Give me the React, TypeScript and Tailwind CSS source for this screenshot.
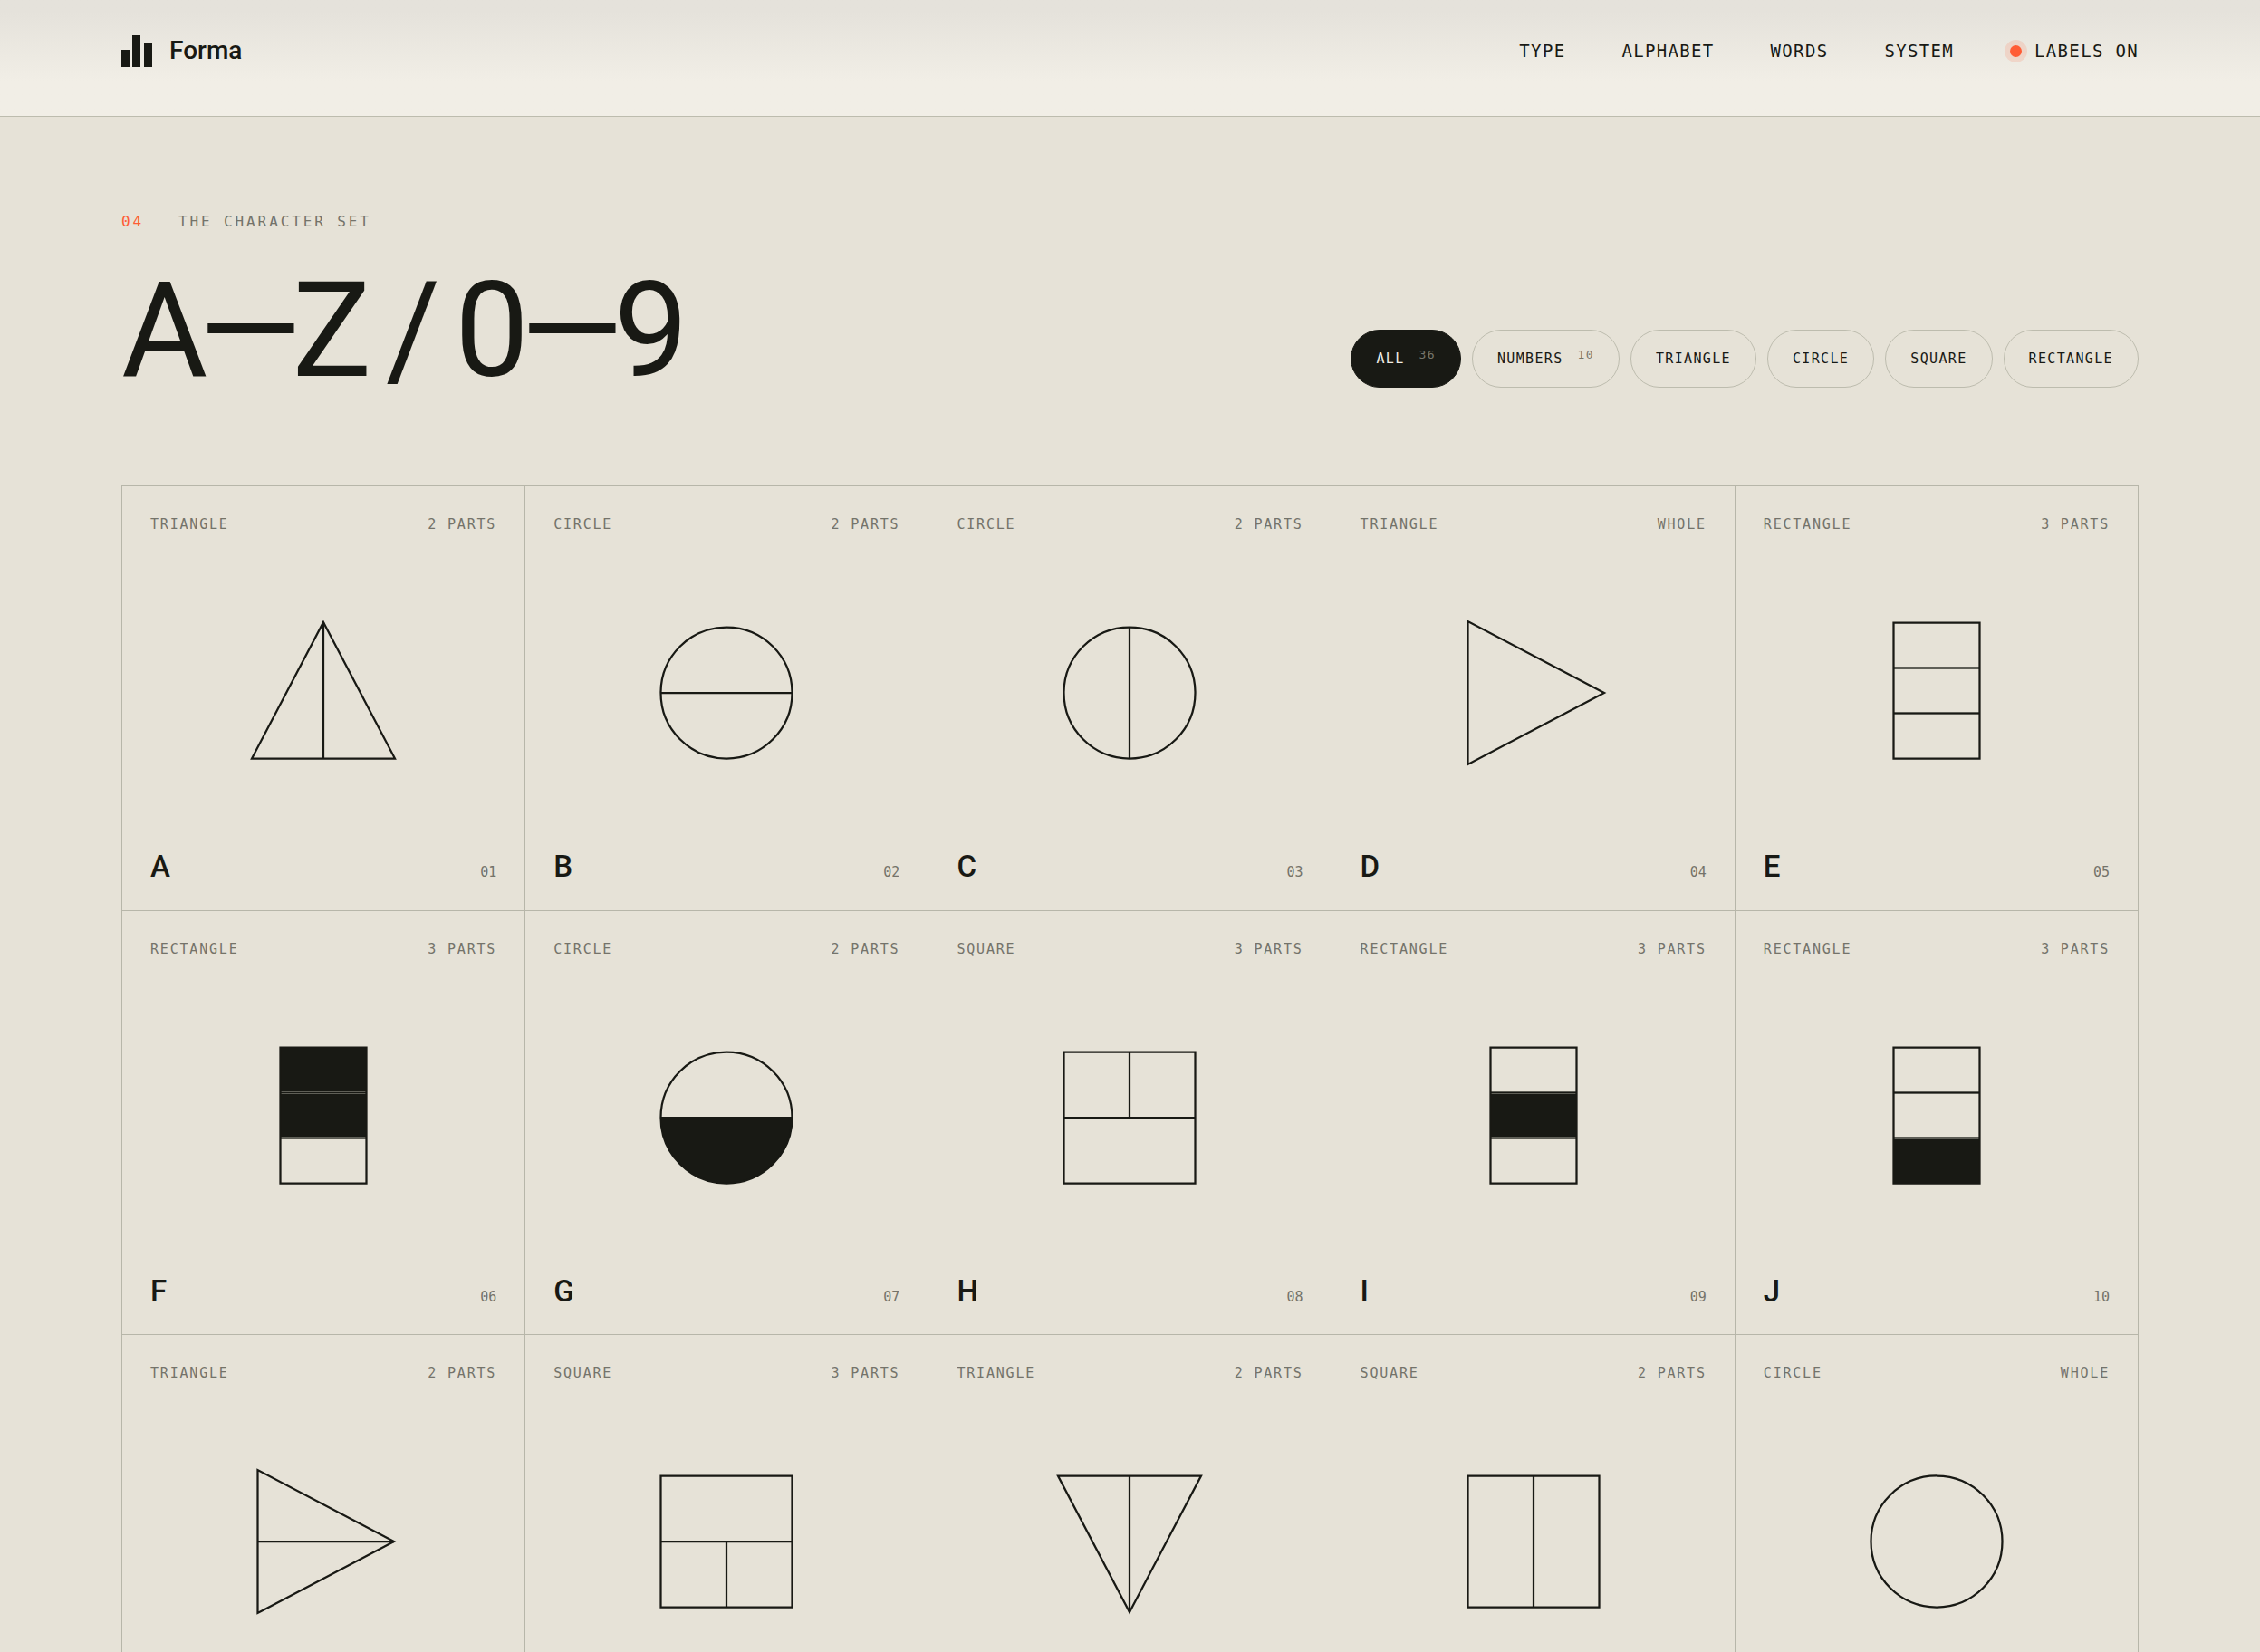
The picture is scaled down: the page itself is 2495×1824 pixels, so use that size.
import React, { useState } from 'react';

type Shape =
  | 'triangleUp'
  | 'triangleRight'
  | 'triangleDown'
  | 'circle'
  | 'square'
  | 'rectangle';

type Line = [number, number, number, number];

interface Glyph {
  letter: string;
  family: string;
  parts: string;
  shape: Shape;
  cuts?: Line[];
  fill?: string;
}

const INK = '#181914';

// Todas as formas usam uma área de 200x200 centrada em 100,100
const OUTLINES: Record<Shape, string> = {
  triangleUp: 'M100 22L179 172.5H21Z',
  triangleRight: 'M27.5 21V179L178 100Z',
  triangleDown: 'M100 178L179 27.5H21Z',
  circle: 'M100 27.5A72.5 72.5 0 0 1 100 172.5A72.5 72.5 0 0 1 100 27.5Z',
  square: 'M27.5 27.5H172.5V172.5H27.5Z',
  rectangle: 'M52.5 22.5H147.5V172.5H52.5Z',
};

const THIRDS: Line[] = [
  [52.5, 72.5, 147.5, 72.5],
  [52.5, 122.5, 147.5, 122.5],
];

const GLYPHS: Glyph[] = [
  { letter: 'A', family: 'Triangle', parts: '2 parts', shape: 'triangleUp', cuts: [[100, 22, 100, 172]] },
  { letter: 'B', family: 'Circle', parts: '2 parts', shape: 'circle', cuts: [[28, 100, 172, 100]] },
  { letter: 'C', family: 'Circle', parts: '2 parts', shape: 'circle', cuts: [[100, 28, 100, 172]] },
  { letter: 'D', family: 'Triangle', parts: 'Whole', shape: 'triangleRight' },
  { letter: 'E', family: 'Rectangle', parts: '3 parts', shape: 'rectangle', cuts: THIRDS },
  { letter: 'F', family: 'Rectangle', parts: '3 parts', shape: 'rectangle', cuts: THIRDS, fill: 'M52.5 22.5H147.5V122.5H52.5Z' },
  { letter: 'G', family: 'Circle', parts: '2 parts', shape: 'circle', cuts: [[28, 100, 172, 100]], fill: 'M27.5 100A72.5 72.5 0 0 0 172.5 100Z' },
  { letter: 'H', family: 'Square', parts: '3 parts', shape: 'square', cuts: [[28, 100, 172, 100], [100, 28, 100, 100]] },
  { letter: 'I', family: 'Rectangle', parts: '3 parts', shape: 'rectangle', cuts: THIRDS, fill: 'M52.5 72.5H147.5V122.5H52.5Z' },
  { letter: 'J', family: 'Rectangle', parts: '3 parts', shape: 'rectangle', cuts: THIRDS, fill: 'M52.5 122.5H147.5V172.5H52.5Z' },
  { letter: 'K', family: 'Triangle', parts: '2 parts', shape: 'triangleRight', cuts: [[28, 100, 178, 100]] },
  { letter: 'L', family: 'Square', parts: '3 parts', shape: 'square', cuts: [[28, 100, 172, 100], [100, 100, 100, 172]] },
  { letter: 'M', family: 'Triangle', parts: '2 parts', shape: 'triangleDown', cuts: [[100, 28, 100, 178]] },
  { letter: 'N', family: 'Square', parts: '2 parts', shape: 'square', cuts: [[100, 28, 100, 172]] },
  { letter: 'O', family: 'Circle', parts: 'Whole', shape: 'circle' },
];

const NAV = ['Type', 'Alphabet', 'Words', 'System'];

const FILTERS = [
  { name: 'All', count: 36 },
  { name: 'Numbers', count: 10 },
  { name: 'Triangle' },
  { name: 'Circle' },
  { name: 'Square' },
  { name: 'Rectangle' },
];

const Figure: React.FC<{ glyph: Glyph }> = ({ glyph }) => (
  <svg viewBox="0 0 200 200" className="h-[200px] w-[200px]" fill="none" stroke={INK} strokeWidth="2.25" aria-hidden="true">
    {glyph.fill && <path d={glyph.fill} fill={INK} stroke="none" />}
    {glyph.shape === 'rectangle' &&
      glyph.cuts?.map(([x1, y1, x2, y2]) => (
        <line key={y1} x1={x1} y1={y1} x2={x2} y2={y2} stroke="#5f5f57" strokeWidth="3" />
      ))}
    {glyph.cuts?.map(([x1, y1, x2, y2]) => (
      <line
        key={`${x1}-${y1}-${x2}`}
        x1={x1}
        y1={y1}
        x2={x2}
        y2={y2}
        strokeWidth={glyph.shape === 'rectangle' ? 1 : 2.25}
      />
    ))}
    <path d={OUTLINES[glyph.shape]} />
  </svg>
);

const Header: React.FC = () => {
  const [labels, setLabels] = useState(true);

  return (
    <header className="flex h-[129px] items-start justify-between border-b border-[#bdbcae] bg-linear-to-b from-[#e5e2db] from-10% to-[#f1eee6] to-70% px-[134px] pt-9">
      <a href="#top" className="flex items-center gap-[18px]">
        <svg viewBox="0 0 35 35" className="h-[35px] w-[35px]" fill={INK} aria-hidden="true">
          <path d="M0 16H9V35H0ZM12 0H21V35H12ZM25 8H34V35H25Z" />
        </svg>
        <span className="text-[28px] leading-10 font-medium">Forma</span>
      </a>
      <nav className="flex items-center gap-[62px] font-['DejaVu_Sans_Mono',monospace] text-[19px] leading-10 tracking-[0.07em] uppercase">
        {NAV.map((item) => (
          <a key={item} href={`#${item.toLowerCase()}`}>
            {item}
          </a>
        ))}
        <button type="button" onClick={() => setLabels(!labels)} className="flex items-center gap-3.5 uppercase">
          <span className="size-[13px] rounded-full bg-[#ff5c35] ring-6 ring-[#ff5c35]/15" />
          Labels {labels ? 'on' : 'off'}
        </button>
      </nav>
    </header>
  );
};

const Filters: React.FC = () => {
  const [active, setActive] = useState('All');

  return (
    <div className="flex gap-3 font-['DejaVu_Sans_Mono',monospace] text-[15px]">
      {FILTERS.map(({ name, count }) => (
        <button
          key={name}
          type="button"
          aria-pressed={active === name}
          onClick={() => setActive(name)}
          className={`flex h-16 items-center rounded-full border px-[27px] tracking-[0.09em] uppercase ${
            active === name ? 'border-[#181914] bg-[#181914] text-[#f1ede5]' : 'border-[#bdbcae]'
          }`}
        >
          {name}
          {count && <span className="ml-4 pb-2 text-[13px] text-[#77766c]">{count}</span>}
        </button>
      ))}
    </div>
  );
};

const GlyphCell: React.FC<{ glyph: Glyph; index: number }> = ({ glyph, index }) => (
  <article className="flex aspect-[0.95] flex-col justify-between border-r border-b border-[#b7b6a9] px-[31px] pt-8 pb-[30px] font-['DejaVu_Sans_Mono',monospace] text-[15px] text-[#74736a]">
    <div className="flex justify-between leading-5 tracking-[0.12em] uppercase">
      <span>{glyph.family}</span>
      <span>{glyph.parts}</span>
    </div>
    <div className="flex justify-center">
      <Figure glyph={glyph} />
    </div>
    <div className="flex items-baseline justify-between">
      <span className="font-[Roboto,sans-serif] text-[33px] leading-8 font-medium text-[#181914]">{glyph.letter}</span>
      <span>{String(index + 1).padStart(2, '0')}</span>
    </div>
  </article>
);

const App: React.FC = () => {
  return (
    <div id="top" className="min-h-screen bg-[#e6e2d7] font-[Roboto,sans-serif] text-[#181914]">
      <Header />
      <main className="px-[134px] pt-[104px]">
        <p className="flex gap-[38px] font-['DejaVu_Sans_Mono',monospace] text-base leading-6 tracking-[0.18em] uppercase">
          <span className="text-[#ff5c35]">04</span>
          <span className="text-[#74736a]">The character set</span>
        </p>
        <div className="mb-[108px] flex items-end justify-between">
          <h1 className="mt-[46px] text-[146px] leading-[125px] tracking-[-0.07em]">A—Z / 0—9</h1>
          <Filters />
        </div>
        <section className="grid grid-cols-5 border-t border-l border-[#b7b6a9]">
          {GLYPHS.map((glyph, index) => (
            <GlyphCell key={glyph.letter} glyph={glyph} index={index} />
          ))}
        </section>
      </main>
    </div>
  );
};

export default App;
